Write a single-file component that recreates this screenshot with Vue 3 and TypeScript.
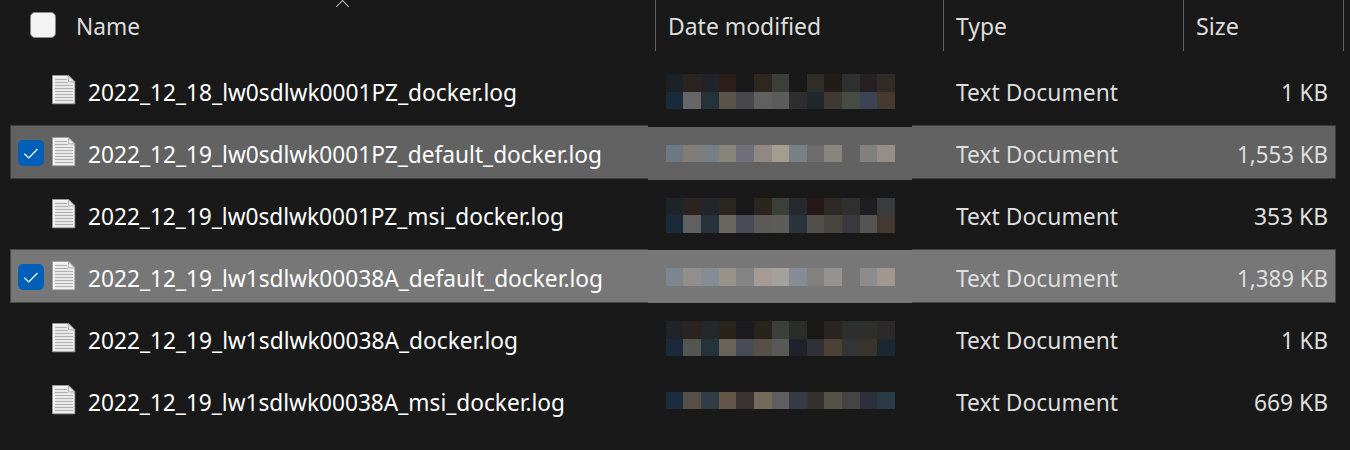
<script setup lang="ts">
interface FileRow {
  name: string
  nameWidth: number
  size: string
  sizeWidth: number
  selected?: 'dim' | 'bright'
  mosaicTop: number
  bands: { height: number; colors: string[] }[]
}

const band = (height: number, colors: string) => ({
  height,
  colors: colors.split(' ').map((c) => (c === '-' ? 'transparent' : '#' + c)),
})

const headers = [
  { label: 'Name', left: 76, width: 64, cls: 'h-name' },
  { label: 'Date modified', left: 12, width: 153, cls: 'h-date' },
  { label: 'Type', left: 12, width: 51, cls: 'h-type' },
  { label: 'Size', left: 12, width: 43, cls: 'h-size' },
]

const rows: FileRow[] = [
  {
    name: '2022_12_18_lw0sdlwk0001PZ_docker.log', nameWidth: 429, size: '1 KB', sizeWidth: 47, mosaicTop: 11,
    bands: [
      band(18, '1a2228 2a2320 20242a 2a1d1a - 2e2720 3a3f3a - 2e2d28 211c18 2c302e 262024 302b24'),
      band(17, '1a2a3a 666666 25323a 5a544c 48484c 606060 5c5c5c 2e2e2e 20282e 403833 464c44 3c4454 463a2e'),
    ],
  },
  {
    name: '2022_12_19_lw0sdlwk0001PZ_default_docker.log', nameWidth: 514, size: '1,553 KB', sizeWidth: 91, selected: 'dim', mosaicTop: 20,
    bands: [band(17, '6c7884 827b76 767e86 88837b 70707a 908882 a49c90 788088 6e6c6e 8a857c - 80807e 968e88')],
  },
  {
    name: '2022_12_19_lw0sdlwk0001PZ_msi_docker.log', nameWidth: 476, size: '353 KB', sizeWidth: 74, mosaicTop: 11,
    bands: [
      band(17, '1c2428 2a2320 22262c 2c2620 - 2a261e 3a3f3a 25282c 241819 302a26 2e302e 1e1d22 3a3b3c'),
      band(18, '1a2a3a 606060 25323a 6a665f 484a54 5c5a57 5c5c5a 2a343c 50504a 48453f 3c3840 545452 443832'),
    ],
  },
  {
    name: '2022_12_19_lw1sdlwk00038A_default_docker.log', nameWidth: 515, size: '1,389 KB', sizeWidth: 91, selected: 'bright', mosaicTop: 19,
    bands: [band(18, '7c8690 948e8a 868c94 98948c 848486 a49c94 a4a09c 868c96 848080 96948e - 8c8c8c a09890')],
  },
  {
    name: '2022_12_19_lw1sdlwk00038A_docker.log', nameWidth: 430, size: '1 KB', sizeWidth: 47, mosaicTop: 10,
    bands: [
      band(18, '1e2427 2a2320 24282a 28241c 1c1b1f 28241c 3a3f3a 2c2d2a - 2a2521 2c2f2e 2e2e2c 2c292b'),
      band(17, '1a2a3a 545452 25323a 68645c 484c54 565049 5a5854 1e222a 303036 4a4036 343436 3a332c 1a2832'),
    ],
  },
  {
    name: '2022_12_19_lw1sdlwk00038A_msi_docker.log', nameWidth: 477, size: '669 KB', sizeWidth: 74, mosaicTop: 19,
    bands: [band(17, '1a2c40 584e48 323c46 625648 383230 746a5a 605e60 363a44 343030 545248 444444 2c303a 283a46')],
  },
]
</script>

<template>
  <main class="explorer">
    <header class="head">
      <div v-for="h in headers" :key="h.label" class="hcell" :class="h.cls">
        <span v-if="h.label === 'Name'" class="box"></span>
        <svg v-if="h.label === 'Name'" class="sort" width="16" height="8" viewBox="0 0 16 8">
          <path d="M2.3 6.8 8.5 .4l6.2 6.4" fill="none" stroke="#b4b4b4" stroke-width="1.1" />
        </svg>
        <svg class="label" width="240" height="51">
          <text :x="h.left" y="35" :textLength="h.width" lengthAdjust="spacingAndGlyphs">{{ h.label }}</text>
        </svg>
      </div>
    </header>

    <section class="list">
      <div v-for="r in rows" :key="r.name" class="row" :class="r.selected">
        <div class="check">
          <svg v-if="r.selected" width="26" height="26" viewBox="0 0 26 26">
            <rect width="26" height="26" rx="5" fill="#005fb8" />
            <path d="M6.3 13.7 10.8 18 19.5 9" fill="none" stroke="#fff" stroke-width="1.2" />
          </svg>
        </div>
        <svg class="doc" width="24" height="30" viewBox="0 0 24 30">
          <path d="M.5.5h16.3l6 6v22.3H.5z" fill="#f6f6f6" stroke="#9a9a9a" stroke-width=".8" />
          <path d="M2.5 2.5h13v5h6v20h-19z" fill="#e8e8e8" />
          <path d="M3 4.5h12M3 7.5h13M3 10.5h18M3 13.5h18M3 16.5h18M3 19.5h18M3 22.5h18M3 25.5h18" stroke="#b2b2b2" />
          <path d="M16.6 1v5.9h5.9z" fill="#f2f2f2" stroke="#9a9a9a" stroke-width=".8" />
        </svg>
        <svg class="name" height="54">
          <text x="0" y="38" :textLength="r.nameWidth" lengthAdjust="spacingAndGlyphs">{{ r.name }}</text>
        </svg>
        <div class="date">
          <div class="mosaic" :style="{ paddingTop: r.mosaicTop + 'px' }">
            <div v-for="(b, i) in r.bands" :key="i" class="band" :style="{ height: b.height + 'px' }">
              <i v-for="(c, j) in b.colors" :key="j" :style="{ background: c }"></i>
            </div>
          </div>
        </div>
        <svg class="type" height="54">
          <text x="0" y="38" textLength="162" lengthAdjust="spacingAndGlyphs">Text Document</text>
        </svg>
        <svg class="size" width="124" height="54">
          <text :x="120 - r.sizeWidth" y="38" :textLength="r.sizeWidth" lengthAdjust="spacingAndGlyphs">{{ r.size }}</text>
        </svg>
      </div>
    </section>
  </main>
</template>

<style>
body {
  margin: 0;
  background: #191919;
}
</style>

<style scoped>
.explorer {
  width: 1350px;
  height: 450px;
  overflow: hidden;
  background: #191919;
  font-family: "Noto Sans", "Open Sans", sans-serif;
  font-size: 23.5px;
}
svg {
  display: block;
  flex: none;
  overflow: visible;
}
.head {
  display: flex;
  height: 51px;
}
.hcell {
  position: relative;
  box-sizing: border-box;
  border-right: 1px solid #636363;
}
.h-name { width: 656px; }
.h-date { width: 288px; }
.h-type { width: 240px; }
.h-size { width: 160px; }
.label text {
  fill: #dedede;
}
.box {
  position: absolute;
  left: 30px;
  top: 12px;
  box-sizing: border-box;
  width: 26px;
  height: 26px;
  border: 1px solid #8a8a8a;
  border-radius: 5px;
  background: #f3f3f3;
}
.sort {
  position: absolute;
  left: 334px;
  top: 0;
}
.list {
  display: flex;
  flex-direction: column;
  gap: 8px;
  padding: 12px 0 0 10px;
}
.row {
  display: flex;
  box-sizing: border-box;
  width: 1326px;
  height: 54px;
}
.dim,
.bright {
  border-radius: 2px;
}
.dim {
  background: #626262;
  box-shadow: inset 0 0 0 1px #3c3c3c;
}
.bright {
  background: #777777;
  box-shadow: inset 0 0 0 1px #484848;
}
.check {
  flex: none;
  width: 42px;
  padding: 15px 0 0 8px;
  box-sizing: border-box;
}
.doc {
  margin-top: 12px;
}
.name {
  width: 560px;
  margin-left: 12px;
}
.name text {
  fill: #fff;
}
.date {
  flex: none;
  width: 264px;
  height: 53px;
}
.dim .date {
  margin-top: 2px;
  background: #626262;
  box-shadow: 0 -2px 0 #191919;
}
.bright .date {
  margin-top: 1px;
  background: #777777;
  box-shadow: 0 -1px 0 #191919;
}
.dim .mosaic {
  margin-top: -2px;
}
.bright .mosaic {
  margin-top: -1px;
}
.dim .date,
.bright .date {
  display: flex;
}
.mosaic {
  margin-left: 18px;
}
.band {
  display: grid;
  grid-template-columns: 17px 18px 18px 17px 18px 18px 17px 18px 17px 18px 18px 17px 18px;
}
.type {
  width: 200px;
  margin-left: 44px;
}
.type text,
.size text {
  fill: #dedede;
}
.size {
  margin-left: 52px;
}
</style>
